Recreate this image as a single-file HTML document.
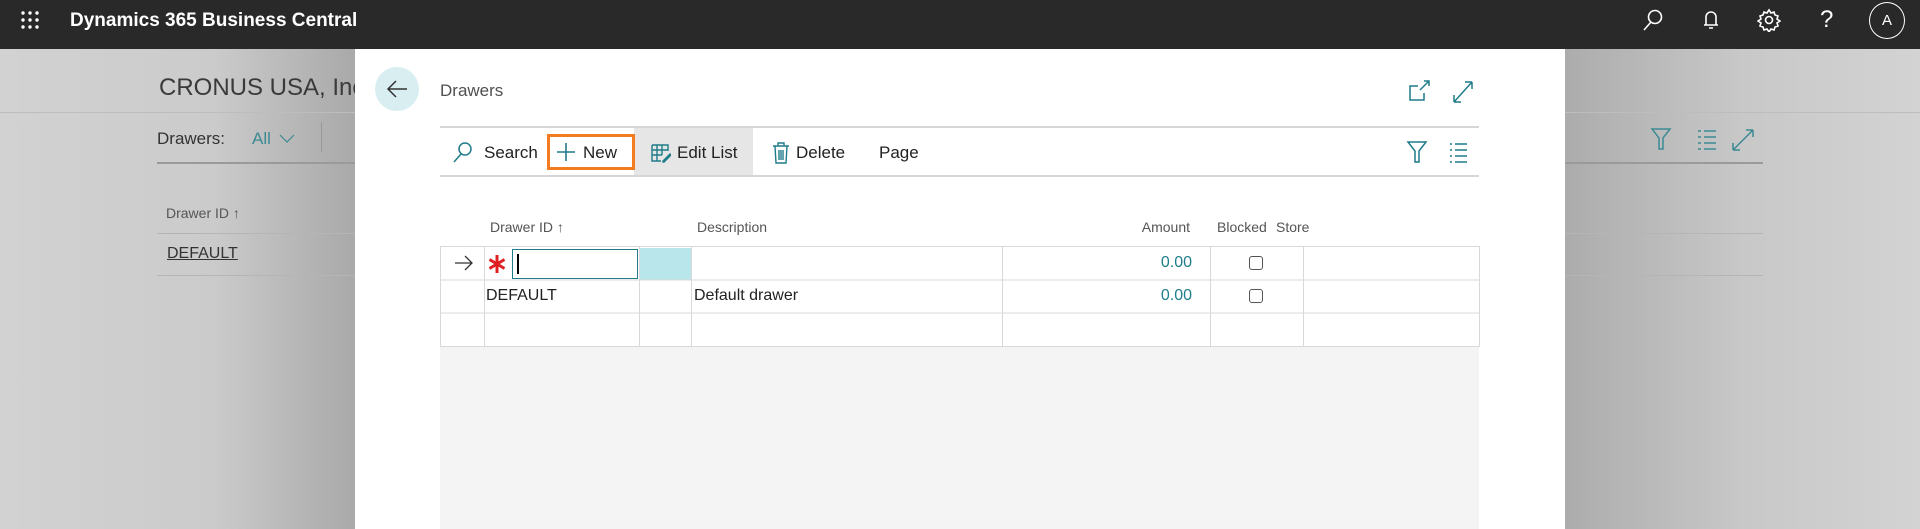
<!DOCTYPE html>
<html><head><meta charset="utf-8"><style>
*{margin:0;padding:0;box-sizing:border-box}
body{width:1920px;height:529px;overflow:hidden;font-family:"Liberation Sans",sans-serif;position:relative;background:#c8c8c8}
.a{position:absolute}
.top{left:0;top:0;width:1920px;height:49px;background:#292929}
.bgL{left:0;top:49px;width:355px;height:480px;background:linear-gradient(90deg,#d2d2d2,#cbcbcb 60%,#a9a9a9)}
.bgR{left:1565px;top:49px;width:355px;height:480px;background:linear-gradient(90deg,#acacac,#c8c8c8 50%,#d3d3d3)}
.modal{left:355px;top:49px;width:1210px;height:480px;background:#fff}
.t{white-space:nowrap}
.teal{color:#00838f}
</style></head><body>
<div class="a top"></div>
<svg class="a" style="left:20px;top:10px" width="20" height="20"><g fill="#fff"><circle cx="3" cy="3" r="1.7"/><circle cx="10" cy="3" r="1.7"/><circle cx="17" cy="3" r="1.7"/><circle cx="3" cy="10" r="1.7"/><circle cx="10" cy="10" r="1.7"/><circle cx="17" cy="10" r="1.7"/><circle cx="3" cy="17" r="1.7"/><circle cx="10" cy="17" r="1.7"/><circle cx="17" cy="17" r="1.7"/></g></svg>
<div class="a t" style="left:70px;top:10px;color:#fff;font-weight:bold;font-size:19px">Dynamics 365 Business Central</div>
<svg class="a" style="left:1641px;top:8px" width="24" height="24" fill="none" stroke="#fff" stroke-width="1.6"><circle cx="14" cy="9" r="6.5"/><path d="M10 14L3 22"/></svg>
<svg class="a" style="left:1700px;top:9px" width="22" height="22" fill="none" stroke="#fff" stroke-width="1.6"><path d="M6 16V8a5 5 0 0 1 10 0v8zM4 16h14M9 19h4"/></svg>
<svg class="a" style="left:1757px;top:8px" width="24" height="24" fill="none" stroke="#fff" stroke-width="1.6"><circle cx="12" cy="12" r="3.5"/><path d="M12 2l2 3 3-1 1 3 3 1-1 3 3 2-3 2 1 3-3 1-1 3-3-1-2 3-2-3-3 1-1-3-3-1 1-3-3-2 3-2-1-3 3-1 1-3 3 1z"/></svg>
<div class="a t" style="left:1820px;top:6px;color:#fff;font-size:24px">?</div>
<div class="a" style="left:1869px;top:2px;width:36px;height:37px;border:1.5px solid #fff;border-radius:50%;color:#fff;font-size:15px;text-align:center;line-height:36px">A</div>

<div class="a bgL"></div><div class="a bgR"></div>
<div class="a" style="left:0;top:112px;width:1920px;height:1px;background:#bdbdbd"></div>
<div class="a t" style="left:159px;top:74px;font-size:24px;color:#3a3a3a">CRONUS USA, Inc</div>
<div class="a t" style="left:157px;top:129px;font-size:17px;color:#333">Drawers:</div>
<div class="a t" style="left:252px;top:129px;font-size:17px;color:#3c8a94">All</div>
<svg class="a" style="left:279px;top:134px" width="16" height="10" fill="none" stroke="#3c8a94" stroke-width="1.2"><path d="M1 1l7 7 7-7"/></svg>
<div class="a" style="left:321px;top:122px;width:1px;height:30px;background:#999"></div>
<div class="a" style="left:157px;top:162px;width:1606px;height:2px;background:#9a9a9a"></div>
<div class="a t" style="left:166px;top:205px;font-size:14px;color:#555">Drawer ID ↑</div>
<div class="a" style="left:157px;top:233px;width:1606px;height:1px;background:#b5b5b5"></div>
<div class="a t" style="left:167px;top:245px;font-size:16px;color:#333;text-decoration:underline">DEFAULT</div>
<div class="a" style="left:157px;top:275px;width:1606px;height:1px;background:#b5b5b5"></div>
<svg class="a" style="left:1650px;top:126px" width="110" height="26" fill="none" stroke="#3c8a94" stroke-width="1.5"><path d="M2 3h18l-7 9v11h-4V12z"/><path d="M48 5h3M48 11h3M48 17h3M48 23h3M54 5h12M54 11h12M54 17h12M54 23h12"/><path d="M83 24l20-20M83 24v-7M83 24h7M103 4h-7M103 4v7"/></svg>

<div class="a modal"></div>
<div class="a" style="left:375px;top:67px;width:44px;height:44px;border-radius:50%;background:#d8eef1"></div>
<svg class="a" style="left:386px;top:79px" width="22" height="20" fill="none" stroke="#333" stroke-width="1.5"><path d="M21 10H2M10 2L2 10l8 8"/></svg>
<div class="a t" style="left:440px;top:81px;font-size:17px;color:#505050">Drawers</div>
<svg class="a" style="left:1408px;top:78px" width="66" height="26" fill="none" stroke="#1f7c8a" stroke-width="1.5"><path d="M10 8H2v14h14v-7M12 12l9-9M16 3h5v5"/><path d="M46 24l18-20M46 24v-7M46 24h7M64 4h-7M64 4v7"/></svg>
<div class="a" style="left:440px;top:126px;width:1039px;height:2px;background:#d6d6d6"></div>
<div class="a" style="left:440px;top:175px;width:1039px;height:2px;background:#d6d6d6"></div>
<div class="a" style="left:634px;top:128px;width:119px;height:47px;background:#e6e6e6"></div>
<div class="a" style="left:547px;top:134px;width:88px;height:36px;border:3px solid #f47b20"></div>
<svg class="a" style="left:452px;top:141px" width="22" height="22" fill="none" stroke="#1f7c8a" stroke-width="1.5"><circle cx="13" cy="8" r="6"/><path d="M9 13L2 21"/></svg>
<div class="a t" style="left:484px;top:143px;font-size:17px;color:#222">Search</div>
<svg class="a" style="left:556px;top:142px" width="20" height="20" stroke="#1f7c8a" stroke-width="1.6"><path d="M10 1v18M1 10h18"/></svg>
<div class="a t" style="left:583px;top:143px;font-size:17px;color:#222">New</div>
<svg class="a" style="left:651px;top:143px" width="20" height="20" fill="none" stroke="#1f7c8a" stroke-width="1.4"><path d="M1 2h16v6M1 2v16h9M1 7h16M1 12h10M6 2v16M11 2v10"/><path d="M12 18l7-7 1 1-7 7h-1z" fill="#1f7c8a"/></svg>
<div class="a t" style="left:677px;top:143px;font-size:17px;color:#222">Edit List</div>
<svg class="a" style="left:772px;top:141px" width="18" height="24" fill="none" stroke="#1f7c8a" stroke-width="1.4"><path d="M1 5h16M6 5V2h6v3M3 5l1 17h10l1-17M7 9v10M9 9v10M11 9v10"/></svg>
<div class="a t" style="left:796px;top:143px;font-size:17px;color:#222">Delete</div>
<div class="a t" style="left:879px;top:143px;font-size:17px;color:#222">Page</div>
<svg class="a" style="left:1406px;top:140px" width="70" height="24" fill="none" stroke="#1f7c8a" stroke-width="1.5"><path d="M2 2h18l-7 9v11h-4V11z"/><path d="M44 4h2M44 10h2M44 16h2M44 22h2M49 4h12M49 10h12M49 16h12M49 22h12"/></svg>

<div class="a t" style="left:490px;top:219px;font-size:14px;color:#555">Drawer ID ↑</div>
<div class="a t" style="left:697px;top:219px;font-size:14px;color:#555">Description</div>
<div class="a t" style="left:1100px;top:219px;width:90px;text-align:right;font-size:14px;color:#555">Amount</div>
<div class="a t" style="left:1217px;top:219px;font-size:14px;color:#555">Blocked</div>
<div class="a t" style="left:1276px;top:219px;font-size:14px;color:#555">Store</div>
<div class="a" style="left:440px;top:346px;width:1039px;height:183px;background:#f4f4f4"></div>
<div class="a" style="left:639px;top:248px;width:52px;height:32px;background:#b9e6eb"></div>
<svg class="a" style="left:440px;top:246px" width="1040" height="101" fill="none" stroke="#d9d9d9" stroke-width="1"><path d="M0.5 .5h1039v100H.5zM0 34h1040M0 67h1040M44.5 0v101M199.5 0v101M251.5 0v101M562.5 0v101M770.5 0v101M863.5 0v101"/></svg>
<svg class="a" style="left:454px;top:255px" width="20" height="16" fill="none" stroke="#333" stroke-width="1.3"><path d="M1 8h17M11 1l7 7-7 7"/></svg>
<svg class="a" style="left:488px;top:254px" width="18" height="20" stroke="#e02020" stroke-width="3"><path d="M9 1v18M1.5 5.5l15 9M16.5 5.5l-15 9"/></svg>
<div class="a" style="left:512px;top:249px;width:126px;height:30px;border:1.5px solid #1f7c8a;background:#fff"></div>
<div class="a" style="left:517px;top:254px;width:1.5px;height:20px;background:#000"></div>
<div class="a t" style="left:1100px;top:254px;width:92px;text-align:right;font-size:16px;color:#1f7c8a">0.00</div>
<div class="a" style="left:1249px;top:256px;width:14px;height:14px;border:1.3px solid #555;border-radius:3px"></div>
<div class="a t" style="left:486px;top:287px;font-size:16px;color:#222">DEFAULT</div>
<div class="a t" style="left:694px;top:287px;font-size:16px;color:#222">Default drawer</div>
<div class="a t" style="left:1100px;top:287px;width:92px;text-align:right;font-size:16px;color:#1f7c8a">0.00</div>
<div class="a" style="left:1249px;top:289px;width:14px;height:14px;border:1.3px solid #555;border-radius:3px"></div>
</body></html>
